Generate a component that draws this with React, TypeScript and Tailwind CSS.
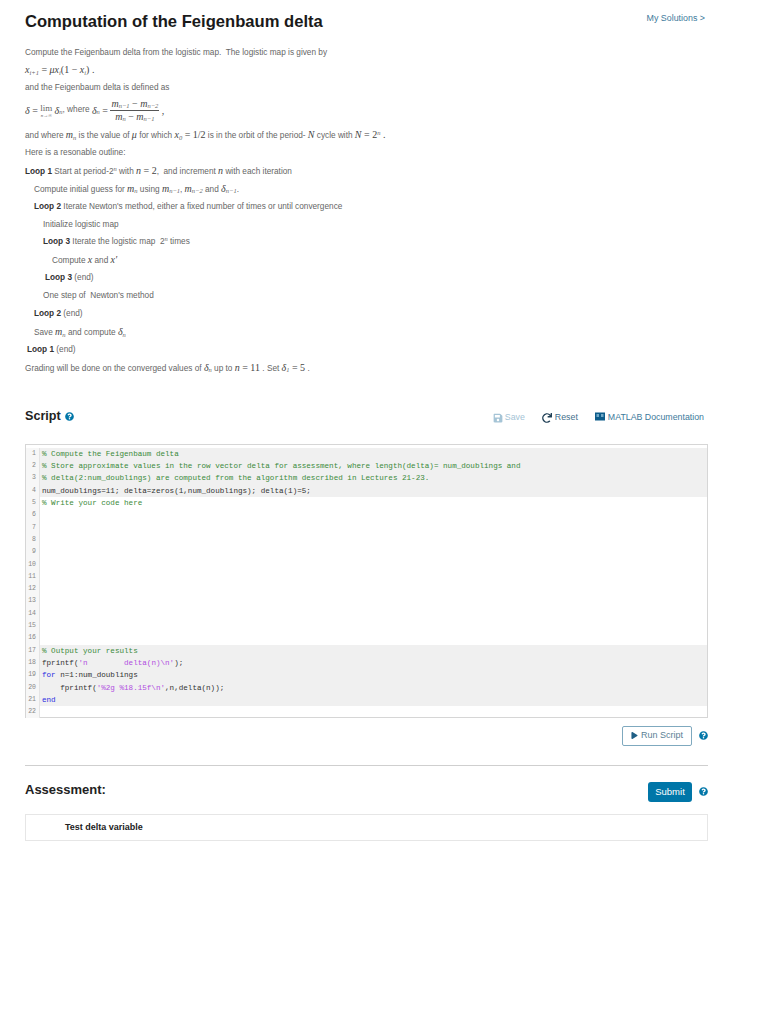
import type { ReactNode } from 'react';
import { FaPlay, FaQuestionCircle, FaRedo, FaSave } from 'react-icons/fa';

const serif = "font-['Liberation_Serif',serif]";

// Inline math variable
function V({ children }: { children: ReactNode }) {
  return <i className={`${serif} text-[10px] text-[#444]`}>{children}</i>;
}

function M({ children }: { children: ReactNode }) {
  return <span className={`${serif} text-[10px] text-[#444]`}>{children}</span>;
}

function Sub({ children }: { children: ReactNode }) {
  return <sub className={`${serif} text-[6.5px] italic`}>{children}</sub>;
}

function Sup({ children }: { children: ReactNode }) {
  return <sup className={`${serif} text-[6.5px] italic`}>{children}</sup>;
}

function Line({ indent = 'pl-0', className = 'h-[17.9px] leading-[17.9px]', children }: { indent?: string; className?: string; children: ReactNode }) {
  return <p className={`${indent} ${className} whitespace-pre`}>{children}</p>;
}

function Loop({ children }: { children: ReactNode }) {
  return <b className="font-bold text-[#333]">{children}</b>;
}

function Help() {
  return <FaQuestionCircle className="text-[#0076a8]" size={9} />;
}

function DocIcon() {
  return (
    <svg width="10" height="9" viewBox="0 0 10 9" className="mb-[2px]">
      <rect x="0" y="0.5" width="10" height="8" fill="#0d5c8a" />
      <rect x="1.5" y="2" width="2.5" height="3" fill="#6fa8c7" />
      <rect x="6" y="2" width="2.5" height="3" fill="#6fa8c7" />
    </svg>
  );
}

type Part = { text: string; color?: string };

const green = 'text-[#3a8a3a]';
const purple = 'text-[#b04fe0]';
const blue = 'text-[#2a2ae0]';

const codeLines: { parts: Part[]; gray?: boolean }[] = [
  { gray: true, parts: [{ text: '% Compute the Feigenbaum delta', color: green }] },
  { gray: true, parts: [{ text: '% Store approximate values in the row vector delta for assessment, where length(delta)= num_doublings and', color: green }] },
  { gray: true, parts: [{ text: '% delta(2:num_doublings) are computed from the algorithm described in Lectures 21-23.', color: green }] },
  { gray: true, parts: [{ text: 'num_doublings=11; delta=zeros(1,num_doublings); delta(1)=5;' }] },
  { parts: [{ text: '% Write your code here', color: green }] },
  { parts: [] }, { parts: [] }, { parts: [] }, { parts: [] }, { parts: [] }, { parts: [] },
  { parts: [] }, { parts: [] }, { parts: [] }, { parts: [] }, { parts: [] },
  { gray: true, parts: [{ text: '% Output your results', color: green }] },
  { gray: true, parts: [{ text: 'fprintf(' }, { text: "'n        delta(n)\\n'", color: purple }, { text: ');' }] },
  { gray: true, parts: [{ text: 'for', color: blue }, { text: ' n=1:num_doublings' }] },
  { gray: true, parts: [{ text: '    fprintf(' }, { text: "'%2g %18.15f\\n'", color: purple }, { text: ',n,delta(n));' }] },
  { gray: true, parts: [{ text: 'end', color: blue }] },
  { parts: [] },
];

export default function App() {
  return (
    <div className="min-h-[1024px] w-[764px] bg-white pl-[25px] pr-[56px] pt-[11px] font-['Liberation_Sans',sans-serif] text-[8.25px] text-[#666]">
      <div className="flex items-start justify-between">
        <h1 className="text-[16.6px] font-bold leading-[22px] text-[#1a1a1a]">Computation of the Feigenbaum delta</h1>
        <a className="mr-[3px] mt-[1px] text-[8.9px] leading-3 text-[#3d7a9c]">My Solutions &gt;</a>
      </div>

      <div className="mt-[11px]">
        <Line className="h-[18px] leading-[18px]">Compute the Feigenbaum delta from the logistic map.  The logistic map is given by</Line>
        <Line className="h-[17px] leading-[15px]"><V>x</V><Sub>i+1</Sub><M> = </M><V>μx</V><Sub>i</Sub><M>(1 − </M><V>x</V><Sub>i</Sub><M>) .</M></Line>
        <Line className="h-[17px] leading-[17px]">and the Feigenbaum delta is defined as</Line>
        <div className="flex h-[29px] items-center whitespace-pre">
          <V>δ</V><M> = </M>
          <span className="inline-flex flex-col items-center leading-none">
            <span className={`${serif} text-[9px] leading-[9px]`}>lim</span>
            <span className={`${serif} text-[5px] italic leading-[5px]`}>n→∞</span>
          </span>
          <span> </span><V>δ</V><Sub>n</Sub><span>, where </span><V>δ</V><Sub>n</Sub><M> = </M>
          <span className="inline-flex flex-col items-center">
            <span className="border-b border-[#555] px-px leading-[11px]"><V>m</V><Sub>n−1</Sub><M> − </M><V>m</V><Sub>n−2</Sub></span>
            <span className="leading-[12px]"><V>m</V><Sub>n</Sub><M> − </M><V>m</V><Sub>n−1</Sub></span>
          </span>
          <M> ,</M>
        </div>
        <Line className="h-[19px] leading-[19px]">and where <V>m</V><Sub>n</Sub> is the value of <V>μ</V> for which <V>x</V><Sub>0</Sub><M> = 1/2</M> is in the orbit of the period- <V>N</V> cycle with <V>N</V><M> = 2</M><Sup>n</Sup><M> .</M></Line>
        <Line>Here is a resonable outline:</Line>
        <Line><Loop>Loop 1</Loop> Start at period-2<Sup>n</Sup> with <V>n</V><M> = 2</M>,  and increment <V>n</V> with each iteration</Line>
        <Line indent="pl-[9px]">Compute initial guess for <V>m</V><Sub>n</Sub> using <V>m</V><Sub>n−1</Sub>, <V>m</V><Sub>n−2</Sub> and <V>δ</V><Sub>n−1</Sub>.</Line>
        <Line indent="pl-[9px]"><Loop>Loop 2</Loop> Iterate Newton's method, either a fixed number of times or until convergence</Line>
        <Line indent="pl-[18px]">Initialize logistic map</Line>
        <Line indent="pl-[18px]"><Loop>Loop 3</Loop> Iterate the logistic map  2<Sup>n</Sup> times</Line>
        <Line indent="pl-[27px]">Compute <V>x</V> and <V>x′</V></Line>
        <Line indent="pl-[20px]"><Loop>Loop 3</Loop> (end)</Line>
        <Line indent="pl-[18px]">One step of  Newton's method</Line>
        <Line indent="pl-[9px]"><Loop>Loop 2</Loop> (end)</Line>
        <Line indent="pl-[9px]">Save <V>m</V><Sub>n</Sub> and compute <V>δ</V><Sub>n</Sub></Line>
        <Line indent="pl-[2px]"><Loop>Loop 1</Loop> (end)</Line>
        <Line>Grading will be done on the converged values of <V>δ</V><Sub>n</Sub> up to <V>n</V><M> = 11</M> . Set <V>δ</V><Sub>1</Sub><M> = 5</M> .</Line>
      </div>

      <div className="mt-[31.3px] flex h-[18px] items-center justify-between">
        <div className="flex items-center gap-[4px]">
          <h2 className="text-[12.6px] font-bold text-[#222]">Script</h2>
          <Help />
        </div>
        <div className="mr-[4px] mt-[2px] flex items-center text-[8.8px]">
          <span className="flex items-center gap-[2px] text-[#a5c4d6]"><FaSave size={10} />Save</span>
          <span className="ml-[17px] flex items-center gap-[3px] text-[#3f6f8c]"><FaRedo size={10} className="text-[#1f3f55]" />Reset</span>
          <span className="ml-[17px] flex items-center gap-[3px] text-[#3d7a9c]"><DocIcon />MATLAB Documentation</span>
        </div>
      </div>

      <div className="mt-[18px] h-[274px] border border-[#d6d6d6] pt-[3px] font-['Liberation_Mono',monospace] text-[7.6px] text-[#333]">
        {codeLines.map((line, i) => (
          <div key={i} className="flex h-[12.3px] items-center">
            <span className="h-full w-[14px] shrink-0 border-r border-[#e4e4e4] bg-[#f7f7f7] pr-[3px] text-right text-[6.5px] leading-[12.3px] text-[#888]">{i + 1}</span>
            <span className={`h-full flex-1 whitespace-pre pl-[2px] leading-[12.3px] ${line.gray ? 'bg-[#f0f0f0]' : ''}`}>
              {line.parts.map((part, j) => <span key={j} className={part.color}>{part.text}</span>)}
            </span>
          </div>
        ))}
      </div>

      <div className="mt-[8px] flex items-center justify-end gap-[7px]">
        <button className="flex h-[20px] w-[70px] items-center justify-center gap-[3px] rounded-[2px] border border-[#7fa9bf] bg-white text-[9px] text-[#5a7f95]">
          <FaPlay size={7} className="text-[#1f5f85]" />Run Script
        </button>
        <Help />
      </div>

      <div className="mt-[19px] border-t border-[#cfcfcf]" />

      <div className="mt-[16px] flex h-[20px] items-center justify-between">
        <h2 className="-mt-[5px] text-[13px] font-bold text-[#222]">Assessment:</h2>
        <div className="flex items-center gap-[7px]">
          <button className="h-[20px] w-[44px] rounded-[3px] bg-[#0076a8] text-[9.5px] text-white">Submit</button>
          <Help />
        </div>
      </div>

      <div className="mt-[12px] flex h-[27px] items-center border border-[#e6e6e6] pl-[39px] text-[9px] font-bold text-[#222]">
        Test delta variable
      </div>
    </div>
  );
}
